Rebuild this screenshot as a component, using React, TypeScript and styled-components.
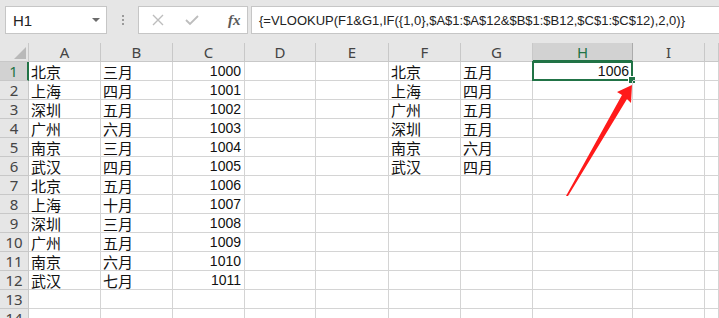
import React from 'react';
import styled, { createGlobalStyle } from 'styled-components';

const GlobalStyle = createGlobalStyle`
    html, body {
        margin: 0;
        padding: 0;
        background: #ffffff;
        overflow: hidden;
    }
    * {
        box-sizing: border-box;
    }
`;

const Page = styled.div`
    width: 719px;
    height: 318px;
    overflow: hidden;
    display: flex;
    flex-direction: column;
    font-family: "Liberation Sans", "Noto Sans CJK SC", sans-serif;
    background: #e6e6e6;
`;

const Toolbar = styled.div`
    height: 43px;
    flex-shrink: 0;
    padding: 6px 0 0 5px;
    display: flex;
    align-items: flex-start;
    background: #e6e6e6;
`;

const NameBox = styled.div`
    width: 102px;
    height: 28px;
    background: #fff;
    border: 1px solid #c6c6c6;
    display: flex;
    align-items: center;
    justify-content: space-between;
    padding: 0 6px 0 7px;
    font-size: 15px;
    color: #222;
`;

const DropArrow = styled.span`
    width: 0;
    height: 0;
    border-left: 4px solid transparent;
    border-right: 4px solid transparent;
    border-top: 4px solid #6b6b6b;
`;

const Grip = styled.div`
    width: 31px;
    height: 28px;
    display: flex;
    flex-direction: column;
    align-items: center;
    justify-content: center;
    gap: 2px;
`;

const Dot = styled.span`
    width: 2px;
    height: 2px;
    background: #9a9a9a;
`;

const IconBox = styled.div`
    width: 110px;
    height: 28px;
    background: #fff;
    border: 1px solid #c6c6c6;
    display: flex;
    align-items: center;
    padding-left: 13px;
    gap: 21px;
    margin-right: 3px;
`;

const Fx = styled.span`
    font-family: "Liberation Serif", serif;
    font-style: italic;
    font-weight: bold;
    font-size: 15px;
    color: #5a5a5a;
    margin-left: 8px;
`;

const FormulaBox = styled.div`
    flex: 1;
    height: 28px;
    background: #fff;
    border: 1px solid #c6c6c6;
    border-right: none;
    display: flex;
    align-items: center;
    padding-left: 7px;
    font-size: 13px;
    color: #222;
    white-space: nowrap;
    overflow: hidden;
`;

const SheetArea = styled.div`
    position: relative;
    flex: 1;
    overflow: hidden;
    background: #fff;
`;

const Grid = styled.div`
    display: grid;
    grid-template-columns: 29px 72px 72px 72px 71px 73px 72px 72px 100px 72px 1fr;
    grid-auto-rows: 19px;
`;

const Corner = styled.div`
    background: #e6e6e6;
    border-right: 1px solid #c8c8c8;
    border-bottom: 1px solid #c8c8c8;
    position: relative;

    &::after {
        content: '';
        position: absolute;
        right: 2px;
        bottom: 2px;
        width: 0;
        height: 0;
        border-left: 12px solid transparent;
        border-bottom: 12px solid #b9b9b9;
    }
`;

const ColHead = styled.div<{ $active?: boolean }>`
    background: ${p => (p.$active ? '#d2d2d2' : '#e6e6e6')};
    color: ${p => (p.$active ? '#217346' : '#444')};
    border-right: 1px solid ${p => (p.$active ? '#ababab' : '#c8c8c8')};
    border-bottom: 1px solid ${p => (p.$active ? '#217346' : '#c8c8c8')};
    box-shadow: ${p => (p.$active ? 'inset 0 -1px 0 #217346' : 'none')};
    display: flex;
    align-items: center;
    justify-content: center;
    font-size: 15px;
    font-family: "Noto Sans", "Liberation Sans", sans-serif;
    line-height: 18px;
`;

const RowHead = styled.div<{ $active?: boolean }>`
    background: ${p => (p.$active ? '#d2d2d2' : '#e6e6e6')};
    color: ${p => (p.$active ? '#217346' : '#444')};
    border-right: ${p => (p.$active ? '2px solid #217346' : '1px solid #c8c8c8')};
    border-bottom: 1px solid #c8c8c8;
    display: flex;
    align-items: center;
    justify-content: center;
    font-size: 15px;
    font-family: "Noto Sans", "Liberation Sans", sans-serif;
    line-height: 1;
`;

const Cell = styled.div<{ $num?: boolean; $selected?: boolean }>`
    position: relative;
    border-right: 1px solid #d4d4d4;
    border-bottom: 1px solid #d4d4d4;
    display: flex;
    align-items: center;
    justify-content: ${p => (p.$num ? 'flex-end' : 'flex-start')};
    padding: ${p => (p.$num ? '0 3px 0 0' : '0 0 0 2px')};
    font-size: ${p => (p.$num ? '14px' : '15px')};
    font-family: ${p => (p.$num ? '"Liberation Sans", sans-serif' : '"Noto Sans CJK SC", sans-serif')};
    color: #111;
    white-space: nowrap;
    line-height: 1;

    ${p =>
        p.$selected &&
        `
        &::before {
            content: '';
            position: absolute;
            left: -1px;
            top: -1px;
            right: -1px;
            bottom: -1px;
            border: 2px solid #217346;
            pointer-events: none;
        }
        &::after {
            content: '';
            position: absolute;
            right: -4px;
            bottom: -4px;
            width: 6px;
            height: 6px;
            background: #217346;
            border: 1px solid #fff;
        }
    `}
`;

const Arrow = styled.svg`
    position: absolute;
    left: 0;
    top: 0;
    pointer-events: none;
`;

const COLS = ['A', 'B', 'C', 'D', 'E', 'F', 'G', 'H', 'I', ''];

const left = [
    ['北京', '三月', '1000'],
    ['上海', '四月', '1001'],
    ['深圳', '五月', '1002'],
    ['广州', '六月', '1003'],
    ['南京', '三月', '1004'],
    ['武汉', '四月', '1005'],
    ['北京', '五月', '1006'],
    ['上海', '十月', '1007'],
    ['深圳', '三月', '1008'],
    ['广州', '五月', '1009'],
    ['南京', '六月', '1010'],
    ['武汉', '七月', '1011'],
];

const right = [
    ['北京', '五月'],
    ['上海', '四月'],
    ['广州', '五月'],
    ['深圳', '五月'],
    ['南京', '六月'],
    ['武汉', '四月'],
];

function App() {
    const rows = [];
    for (let r = 0; r < 14; r++) {
        const l = left[r] || ['', '', ''];
        const g = right[r] || ['', ''];
        rows.push(
            <React.Fragment key={r}>
                <RowHead $active={r === 0}>{r + 1}</RowHead>
                <Cell>{l[0]}</Cell>
                <Cell>{l[1]}</Cell>
                <Cell $num>{l[2]}</Cell>
                <Cell />
                <Cell />
                <Cell>{g[0]}</Cell>
                <Cell>{g[1]}</Cell>
                <Cell $num $selected={r === 0}>{r === 0 ? '1006' : ''}</Cell>
                <Cell />
                <Cell />
            </React.Fragment>
        );
    }

    return (
        <Page>
            <GlobalStyle />
            <Toolbar>
                <NameBox>
                    H1
                    <DropArrow />
                </NameBox>
                <Grip>
                    <Dot />
                    <Dot />
                    <Dot />
                </Grip>
                <IconBox>
                    <svg width="12" height="12" viewBox="0 0 12 12">
                        <path d="M1 1 L11 11 M11 1 L1 11" stroke="#bdbdbd" strokeWidth="1.4" fill="none" />
                    </svg>
                    <svg width="14" height="12" viewBox="0 0 14 12">
                        <path d="M1 6 L5 10 L13 2" stroke="#bdbdbd" strokeWidth="1.8" fill="none" />
                    </svg>
                    <Fx>fx</Fx>
                </IconBox>
                <FormulaBox>{'{=VLOOKUP(F1&G1,IF({1,0},$A$1:$A$12&$B$1:$B12,$C$1:$C$12),2,0)}'}</FormulaBox>
            </Toolbar>
            <SheetArea>
                <Grid>
                    <Corner />
                    {COLS.map((c, i) => (
                        <ColHead key={i} $active={c === 'H'}>{c}</ColHead>
                    ))}
                    {rows}
                </Grid>
                <Arrow width="719" height="275" viewBox="0 43 719 275">
                    <polygon points="632,85 617,92 622,95 566,196 568,196 627,99 631,103" fill="#ff1a1a" />
                </Arrow>
            </SheetArea>
        </Page>
    );
}

export default App;
